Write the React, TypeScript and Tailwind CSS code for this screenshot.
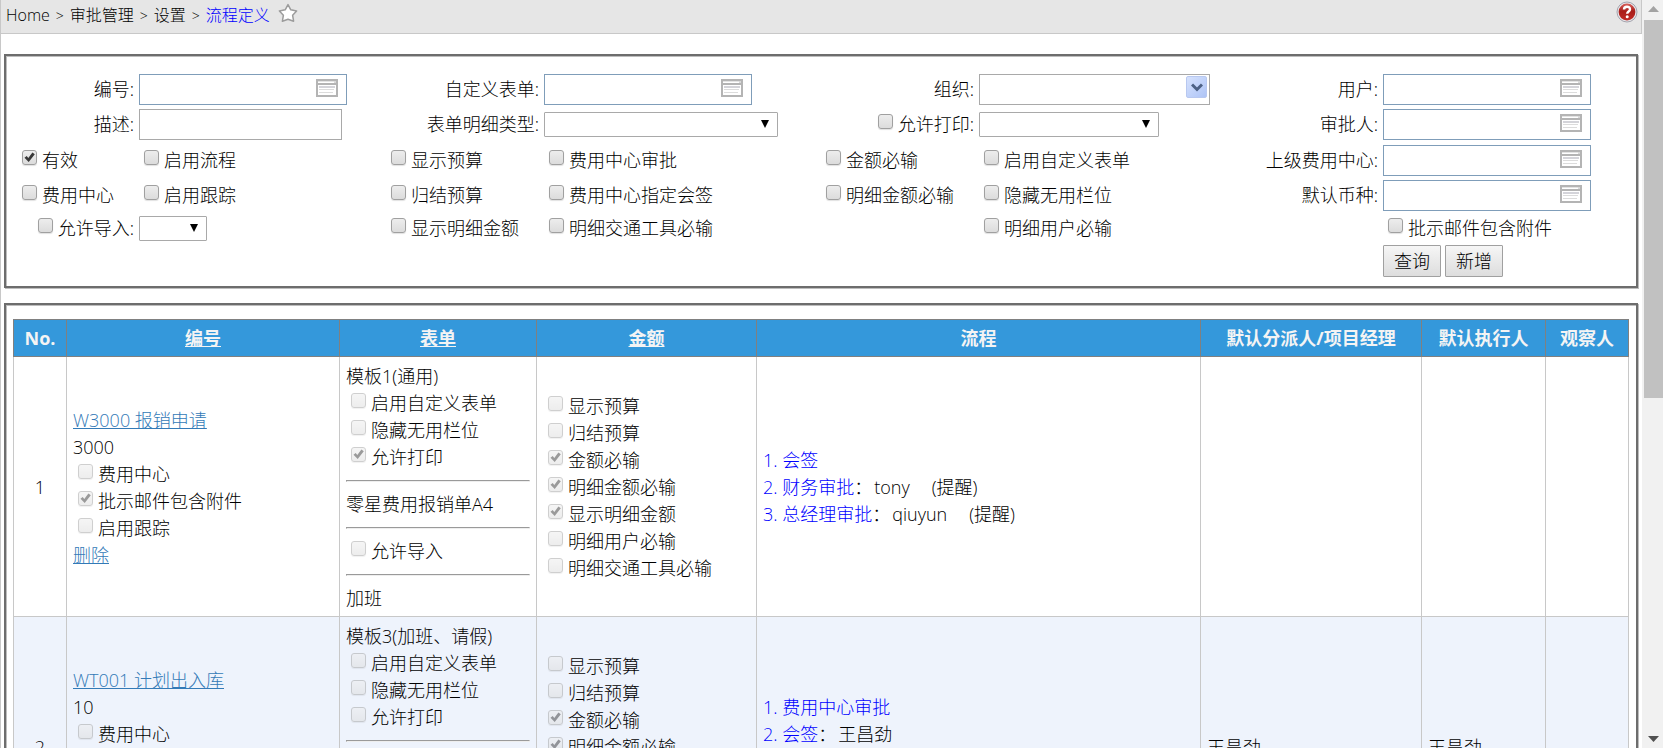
import type { ReactNode } from 'react'

type CheckProps = {
    label: string
    checked?: boolean
    disabled?: boolean
}

type Step = {
    name: string
    user?: string
    remind?: boolean
}

type Row = {
    no: number
    title: string
    code: string
    template: string
    print: boolean
    mail: boolean
    steps: Step[]
    assignee: string
    executor: string
}

const rows: Row[] = [
    {
        no: 1,
        title: 'W3000 报销申请',
        code: '3000',
        template: '模板1(通用)',
        print: true,
        mail: true,
        steps: [
            { name: '会签' },
            { name: '财务审批', user: 'tony', remind: true },
            { name: '总经理审批', user: 'qiuyun', remind: true },
        ],
        assignee: '',
        executor: '',
    },
    {
        no: 2,
        title: 'WT001 计划出入库',
        code: '10',
        template: '模板3(加班、请假)',
        print: false,
        mail: false,
        steps: [
            { name: '费用中心审批' },
            { name: '会签', user: '王昌劲' },
            { name: '财务审批' },
            { name: '总经理审批' },
        ],
        assignee: '王昌劲',
        executor: '王昌劲',
    },
]

function Check({ label, checked, disabled }: CheckProps) {
    return (
        <label className="flex items-start leading-[27px] whitespace-nowrap">
            <span className={`relative mx-[5px] mt-[3px] size-[15px] shrink-0 ${disabled ? 'opacity-50' : ''}`}>
                <input
                    type="checkbox"
                    defaultChecked={checked}
                    disabled={disabled}
                    className="peer block size-[15px] appearance-none rounded-[3px] border border-[#a0a0a0] bg-linear-to-b from-[#ededed] to-[#dcdcdc] shadow-[0_1px_1px_rgba(0,0,0,0.12)]"
                />
                <svg
                    viewBox="0 0 15 15"
                    className="pointer-events-none absolute inset-0 hidden size-[15px] peer-checked:block"
                >
                    <path d="M2.5 7.8 4.7 6 6.3 8 10.4 2.6 12.8 4.3 6.7 12z" fill="#383838" />
                </svg>
            </span>
            {label}
        </label>
    )
}

function FieldLabel({ id, children }: { id: string; children: ReactNode }) {
    return (
        <label htmlFor={id} className="pr-[5px] text-right whitespace-nowrap">
            {children}
        </label>
    )
}

function Picker({ id }: { id: string }) {
    return (
        <div className="relative w-[208px]">
            <input id={id} type="text" className="block h-[31px] w-full border border-[#7f9db9] bg-white pr-8 pl-1" />
            <button type="button" aria-label="选择" className="absolute top-[5px] right-[9px]">
                <svg width="22" height="18" viewBox="0 0 22 18" className="block">
                    <rect x="1" y="1" width="20" height="16" fill="#fff" stroke="#b4b4b4" strokeWidth="2" />
                    <path d="M2 2.5h16" stroke="#e4e4e4" />
                    <path d="M1 5h20" stroke="#b4b4b4" strokeWidth="2" />
                    <path d="M18 2h2v2h-2z" fill="#d8d8d8" />
                    <path d="M3 8h16" stroke="#a9a9b4" strokeWidth="1" />
                    <path d="M3 10.5h15M3 13.5h14" stroke="#dcdcdc" />
                </svg>
            </button>
        </div>
    )
}

function Select({ id, label, width }: { id: string; label?: string; width: string }) {
    return (
        <div className={`relative ${width}`}>
            <select
                id={id}
                aria-label={label}
                className="block h-[25px] w-full appearance-none rounded-[1px] border border-[#a9a9a9] bg-white"
            >
                <option></option>
            </select>
            <svg width="8" height="8" viewBox="0 0 8 8" className="pointer-events-none absolute top-[8px] right-[9px]">
                <path d="M0 0h8L4 8z" fill="#000" />
            </svg>
        </div>
    )
}

function Divider() {
    return <hr className="my-[9px] h-[2px] border border-[#eee] border-t-[#9a9a9a] border-l-[#9a9a9a]" />
}

function Panel({ className, children }: { className: string; children: ReactNode }) {
    return (
        <section
            className={`border-2 border-[#6d6d6d] shadow-[1px_1px_0_#bdbdbd,inset_1px_1px_0_#bdbdbd] ${className}`}
        >
            {children}
        </section>
    )
}

function Header() {
    return (
        <header className="flex h-[34px] items-start justify-between border-r border-b border-[#c8c8c8] bg-[#e6e6e6] pl-[5px]">
            <nav className="flex h-[30px] items-center gap-[6px] text-[16px]">
                <a href="#home">Home</a>
                <span className="text-[14px]">&gt;</span>
                <a href="#approval">审批管理</a>
                <span className="text-[14px]">&gt;</span>
                <a href="#settings">设置</a>
                <span className="text-[14px]">&gt;</span>
                <a href="#process" className="text-[#0000ff]">流程定义</a>
                <button type="button" aria-label="收藏" className="mb-[5px] ml-[2px]">
                    <svg width="20" height="20" viewBox="0 0 20 20" className="block">
                        <path
                            d="M10 1.6 12.8 6.8 18.6 7.9 14.6 12.2 15.6 18.2 10 16.2 4.4 18.2 5.4 12.2 1.4 7.9 7.2 6.8z"
                            fill="#fff"
                            stroke="#9c9c9c"
                            strokeWidth="1.5"
                            strokeLinejoin="round"
                        />
                    </svg>
                </button>
            </nav>
            <button type="button" aria-label="帮助" className="mt-[1px] mr-[3px]">
                <svg width="22" height="22" viewBox="0 0 22 22" className="block">
                    <defs>
                        <linearGradient id="help-red" x1="0" y1="0" x2="0" y2="1">
                            <stop offset="0" stopColor="#d9605a" />
                            <stop offset="0.45" stopColor="#a81e1a" />
                            <stop offset="1" stopColor="#c22a26" />
                        </linearGradient>
                    </defs>
                    <circle cx="11" cy="11" r="10" fill="#e6e6ea" stroke="#a4a4ae" />
                    <circle cx="11" cy="11" r="8.4" fill="url(#help-red)" />
                    <path
                        d="M8 8.5c0-3.8 6-3.6 6-.3 0 2.3-2.8 2.3-2.8 4.6"
                        fill="none"
                        stroke="#fff"
                        strokeWidth="2.4"
                    />
                    <circle cx="11.2" cy="15.8" r="1.5" fill="#fff" />
                </svg>
            </button>
        </header>
    )
}

function SearchForm() {
    return (
        <form className="grid grid-cols-[122px_247fr_158px_277fr_158px_261fr_143px_247fr] grid-rows-[31px_31px_32px_31px_26px_32px] items-center gap-y-1">
            <FieldLabel id="code">编号:</FieldLabel>
            <Picker id="code" />
            <FieldLabel id="custom-form">自定义表单:</FieldLabel>
            <Picker id="custom-form" />
            <FieldLabel id="org">组织:</FieldLabel>
            <div className="relative w-[231px]">
                <input id="org" type="text" className="block h-[31px] w-full border border-[#a9a9a9] bg-white pr-7 pl-1" />
                <button
                    type="button"
                    aria-label="展开"
                    className="absolute top-[2px] right-[3px] flex h-[22px] w-[21px] items-center justify-center rounded-[2px] border border-[#b8c8f0] bg-linear-to-br from-[#d6e2fd] to-[#aec4f6]"
                >
                    <svg width="12" height="9" viewBox="0 0 12 9">
                        <path d="M1 1.5 6 6.5 11 1.5" fill="none" stroke="#4d6185" strokeWidth="3" />
                    </svg>
                </button>
            </div>
            <FieldLabel id="user">用户:</FieldLabel>
            <Picker id="user" />

            <FieldLabel id="desc">描述:</FieldLabel>
            <input id="desc" type="text" className="h-[31px] w-[203px] border border-[#a9a9a9] bg-white px-1" />
            <FieldLabel id="detail-type">表单明细类型:</FieldLabel>
            <Select id="detail-type" width="w-[234px]" />
            <div className="flex justify-end pr-[5px]">
                <Check label="允许打印:" />
            </div>
            <Select id="allow-print" label="允许打印" width="w-[180px]" />
            <FieldLabel id="approver">审批人:</FieldLabel>
            <Picker id="approver" />

            <Check label="有效" checked />
            <Check label="启用流程" />
            <Check label="显示预算" />
            <Check label="费用中心审批" />
            <Check label="金额必输" />
            <Check label="启用自定义表单" />
            <FieldLabel id="parent-center">上级费用中心:</FieldLabel>
            <Picker id="parent-center" />

            <Check label="费用中心" />
            <Check label="启用跟踪" />
            <Check label="归结预算" />
            <Check label="费用中心指定会签" />
            <Check label="明细金额必输" />
            <Check label="隐藏无用栏位" />
            <FieldLabel id="currency">默认币种:</FieldLabel>
            <Picker id="currency" />

            <div className="flex justify-end pr-[5px]">
                <Check label="允许导入:" />
            </div>
            <Select id="allow-import" label="允许导入" width="w-[68px]" />
            <Check label="显示明细金额" />
            <Check label="明细交通工具必输" />
            <div className="col-start-6">
                <Check label="明细用户必输" />
            </div>
            <div className="col-start-8">
                <Check label="批示邮件包含附件" />
            </div>

            <div className="col-start-8 flex gap-1">
                {['查询', '新增'].map((text) => (
                    <button
                        key={text}
                        type="button"
                        className="h-[32px] rounded-[1px] border border-[#a0a0a0] bg-linear-to-b from-[#f6f6f6] to-[#dddddd] px-[10px] whitespace-nowrap"
                    >
                        {text}
                    </button>
                ))}
            </div>
        </form>
    )
}

function ProcessRow({ row }: { row: Row }) {
    const td = 'border border-[#c8c8c8] px-[6px] pt-[6px] pb-[4px]'
    return (
        <tr className="even:bg-[#eef3fc]">
            <td className={`${td} text-center`}>{row.no}</td>
            <td className={td}>
                <a href="#detail" className="text-[#337ab7] underline">{row.title}</a>
                <div>{row.code}</div>
                <Check label="费用中心" disabled />
                <Check label="批示邮件包含附件" checked={row.mail} disabled />
                <Check label="启用跟踪" disabled />
                <a href="#delete" className="text-[#337ab7] underline">删除</a>
            </td>
            <td className={td}>
                <div>{row.template}</div>
                <Check label="启用自定义表单" disabled />
                <Check label="隐藏无用栏位" disabled />
                <Check label="允许打印" checked={row.print} disabled />
                <Divider />
                <div>零星费用报销单A4</div>
                <Divider />
                <Check label="允许导入" disabled />
                <Divider />
                <div>加班</div>
            </td>
            <td className={td}>
                <Check label="显示预算" disabled />
                <Check label="归结预算" disabled />
                <Check label="金额必输" checked disabled />
                <Check label="明细金额必输" checked disabled />
                <Check label="显示明细金额" checked disabled />
                <Check label="明细用户必输" disabled />
                <Check label="明细交通工具必输" disabled />
            </td>
            <td className={td}>
                {row.steps.map((step, i) => (
                    <div key={step.name}>
                        <span className="text-[#0000ff]">{i + 1}. {step.name}</span>
                        {step.user && <span>：<span className="ml-[2px]">{step.user}</span></span>}
                        {step.remind && <span className="ml-[22px]">(提醒)</span>}
                    </div>
                ))}
            </td>
            <td className={td}>{row.assignee}</td>
            <td className={td}>{row.executor}</td>
            <td className={td}></td>
        </tr>
    )
}

function ProcessTable() {
    const th = 'h-[37px] border border-[#808080] p-0'
    return (
        <table className="w-full table-fixed border-collapse">
            <colgroup>
                <col className="w-[53px]" />
                <col className="w-[273px]" />
                <col className="w-[197px]" />
                <col className="w-[220px]" />
                <col />
                <col className="w-[221px]" />
                <col className="w-[124px]" />
                <col className="w-[83px]" />
            </colgroup>
            <thead className="bg-[#3498db] font-bold text-[#f4f4f4]">
                <tr>
                    <th className={th}>No.</th>
                    <th className={th}><a href="#sort-code" className="underline">编号</a></th>
                    <th className={th}><a href="#sort-form" className="underline">表单</a></th>
                    <th className={th}><a href="#sort-amount" className="underline">金额</a></th>
                    <th className={th}>流程</th>
                    <th className={th}>默认分派人/项目经理</th>
                    <th className={th}>默认执行人</th>
                    <th className={th}>观察人</th>
                </tr>
            </thead>
            <tbody>
                {rows.map((row) => (
                    <ProcessRow key={row.no} row={row} />
                ))}
            </tbody>
        </table>
    )
}

function Scrollbar() {
    return (
        <div className="flex w-[21px] shrink-0 flex-col items-center bg-[#f1f1f1] pl-[2px]">
            <svg width="11" height="20" viewBox="0 0 11 20" className="shrink-0">
                <path d="M0 12h11L5.5 6z" fill="#a3a3a3" />
            </svg>
            <div className="flex w-full flex-1 flex-col">
                <div className="h-[53.4%] w-full bg-[#c1c1c1]"></div>
            </div>
            <svg width="11" height="20" viewBox="0 0 11 20" className="shrink-0">
                <path d="M0 8h11L5.5 14z" fill="#505050" />
            </svg>
        </div>
    )
}

export default function App() {
    return (
        <div className="flex h-screen overflow-hidden bg-white font-['Open_Sans','Noto_Sans_CJK_SC',sans-serif] text-[18px] leading-[27px] font-light text-black">
            <main className="min-w-0 flex-1 overflow-x-hidden overflow-y-auto border-l border-[#c8c8c8] [scrollbar-width:none]">
                <Header />
                <Panel className="mt-5 mr-1 ml-[3px] pt-[18px] pr-[6px] pb-[9px] pl-[11px]">
                    <SearchForm />
                </Panel>
                <Panel className="mt-[15px] mr-1 ml-[3px] px-[7px] pt-[14px] pb-4">
                    <ProcessTable />
                </Panel>
            </main>
            <Scrollbar />
        </div>
    )
}
